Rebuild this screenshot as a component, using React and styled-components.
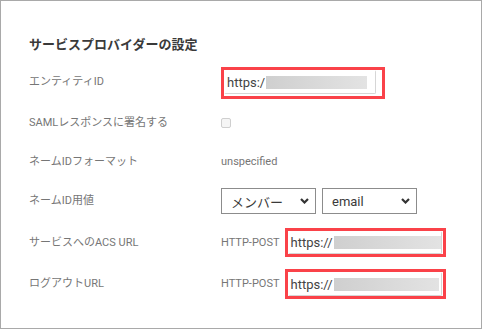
import React from "react";
import styled, { createGlobalStyle } from "styled-components";

const Global = createGlobalStyle`
  html, body { margin: 0; padding: 0; background: #fff; }
  body { font-family: Roboto, "Noto Sans CJK JP", sans-serif; }
  * { box-sizing: border-box; }
`;

const Panel = styled.div`
  width: 482px;
  height: 329px;
  border: 1px solid #a9a9a9;
  padding: 34px 0 0 28px;
  background: #fff;
`;

const Title = styled.h2`
  margin: 0 0 8px;
  font-size: 13px;
  line-height: 20px;
  font-weight: 700;
  color: #3a3a3a;
  font-family: Roboto, "Noto Sans CJK JP", sans-serif;
`;

const Row = styled.div`
  display: grid;
  grid-template-columns: 192px 1fr;
  align-items: center;
  height: ${(p) => p.$h}px;
`;

const Label = styled.div`
  font-size: 11px;
  color: #767676;
  line-height: 16px;
  margin-bottom: ${(p) => p.$lift || 0}px;
`;

const Value = styled.div`
  display: flex;
  align-items: center;
  gap: ${(p) => p.$gap || 0}px;
`;

const Plain = styled.span`
  font-size: 11px;
  color: #767676;
  line-height: 16px;
`;

const Highlight = styled.div`
  border: 3px solid #fa4249;
  padding: 0 ${(p) => p.$pr || 0}px ${(p) => p.$pb || 0}px 0;
  width: ${(p) => p.$w}px;
`;

const UrlInput = styled.div`
  display: flex;
  align-items: center;
  height: ${(p) => p.$h}px;
  border: 1px solid #d6d6d6;
  border-left-color: #fff;
  border-top-color: #fff;
  border-radius: 2px;
  background: #fff;
  padding-left: 2px;
  font-size: 13px;
  font-weight: 400;
  color: #444;
  overflow: hidden;
`;

const Masked = styled.span`
  display: inline-block;
  width: ${(p) => p.$w}px;
  height: 13px;
  margin-left: 1px;
  background: linear-gradient(90deg, #cfcfcf, #e3e3e3);
`;

const Check = styled.span`
  display: inline-block;
  width: 10px;
  height: 10px;
  border: 1px solid #cfcfcf;
  border-radius: 2px;
  background: #f5f5f5;
`;

const SelectBox = styled.div`
  display: flex;
  align-items: center;
  justify-content: space-between;
  width: 95px;
  height: 26px;
  border: 1px solid #8c8c8c;
  padding: 0 6px 0 9px;
  font-size: 13px;
  color: #3a3a3a;
  background: #fff;
`;

const Chevron = () => (
  <svg width="9" height="6" viewBox="0 0 9 6">
    <path d="M1 1 L4.5 4.5 L8 1" fill="none" stroke="#333" strokeWidth="2.2" />
  </svg>
);

const Select = ({ children }) => (
  <SelectBox>
    <span>{children}</span>
    <Chevron />
  </SelectBox>
);

export default function App() {
  return (
    <>
      <Global />
      <Panel>
        <Title>サービスプロバイダーの設定</Title>
        <Row $h={40}>
          <Label $lift={3}>エンティティID</Label>
          <Value>
            <Highlight $w={164} $pr={6} $pb={2}>
              <UrlInput $h={24}>
                https:/<Masked $w={101} />
              </UrlInput>
            </Highlight>
          </Value>
        </Row>
        <Row $h={40}>
          <Label>SAMLレスポンスに署名する</Label>
          <Value>
            <Check />
          </Value>
        </Row>
        <Row $h={38}>
          <Label>ネームIDフォーマット</Label>
          <Value>
            <Plain>unspecified</Plain>
          </Value>
        </Row>
        <Row $h={40}>
          <Label>ネームID用値</Label>
          <Value $gap={6}>
            <Select>メンバー</Select>
            <Select>email</Select>
          </Value>
        </Row>
        <Row $h={43}>
          <Label>サービスへのACS URL</Label>
          <Value $gap={5}>
            <Plain>HTTP-POST</Plain>
            <Highlight $w={161} $pr={1}>
              <UrlInput $h={23}>
                https://<Masked $w={107} />
              </UrlInput>
            </Highlight>
          </Value>
        </Row>
        <Row $h={40}>
          <Label>ログアウトURL</Label>
          <Value $gap={5}>
            <Plain>HTTP-POST</Plain>
            <Highlight $w={161} $pr={1}>
              <UrlInput $h={24}>
                https://<Masked $w={105} />
              </UrlInput>
            </Highlight>
          </Value>
        </Row>
      </Panel>
    </>
  );
}
